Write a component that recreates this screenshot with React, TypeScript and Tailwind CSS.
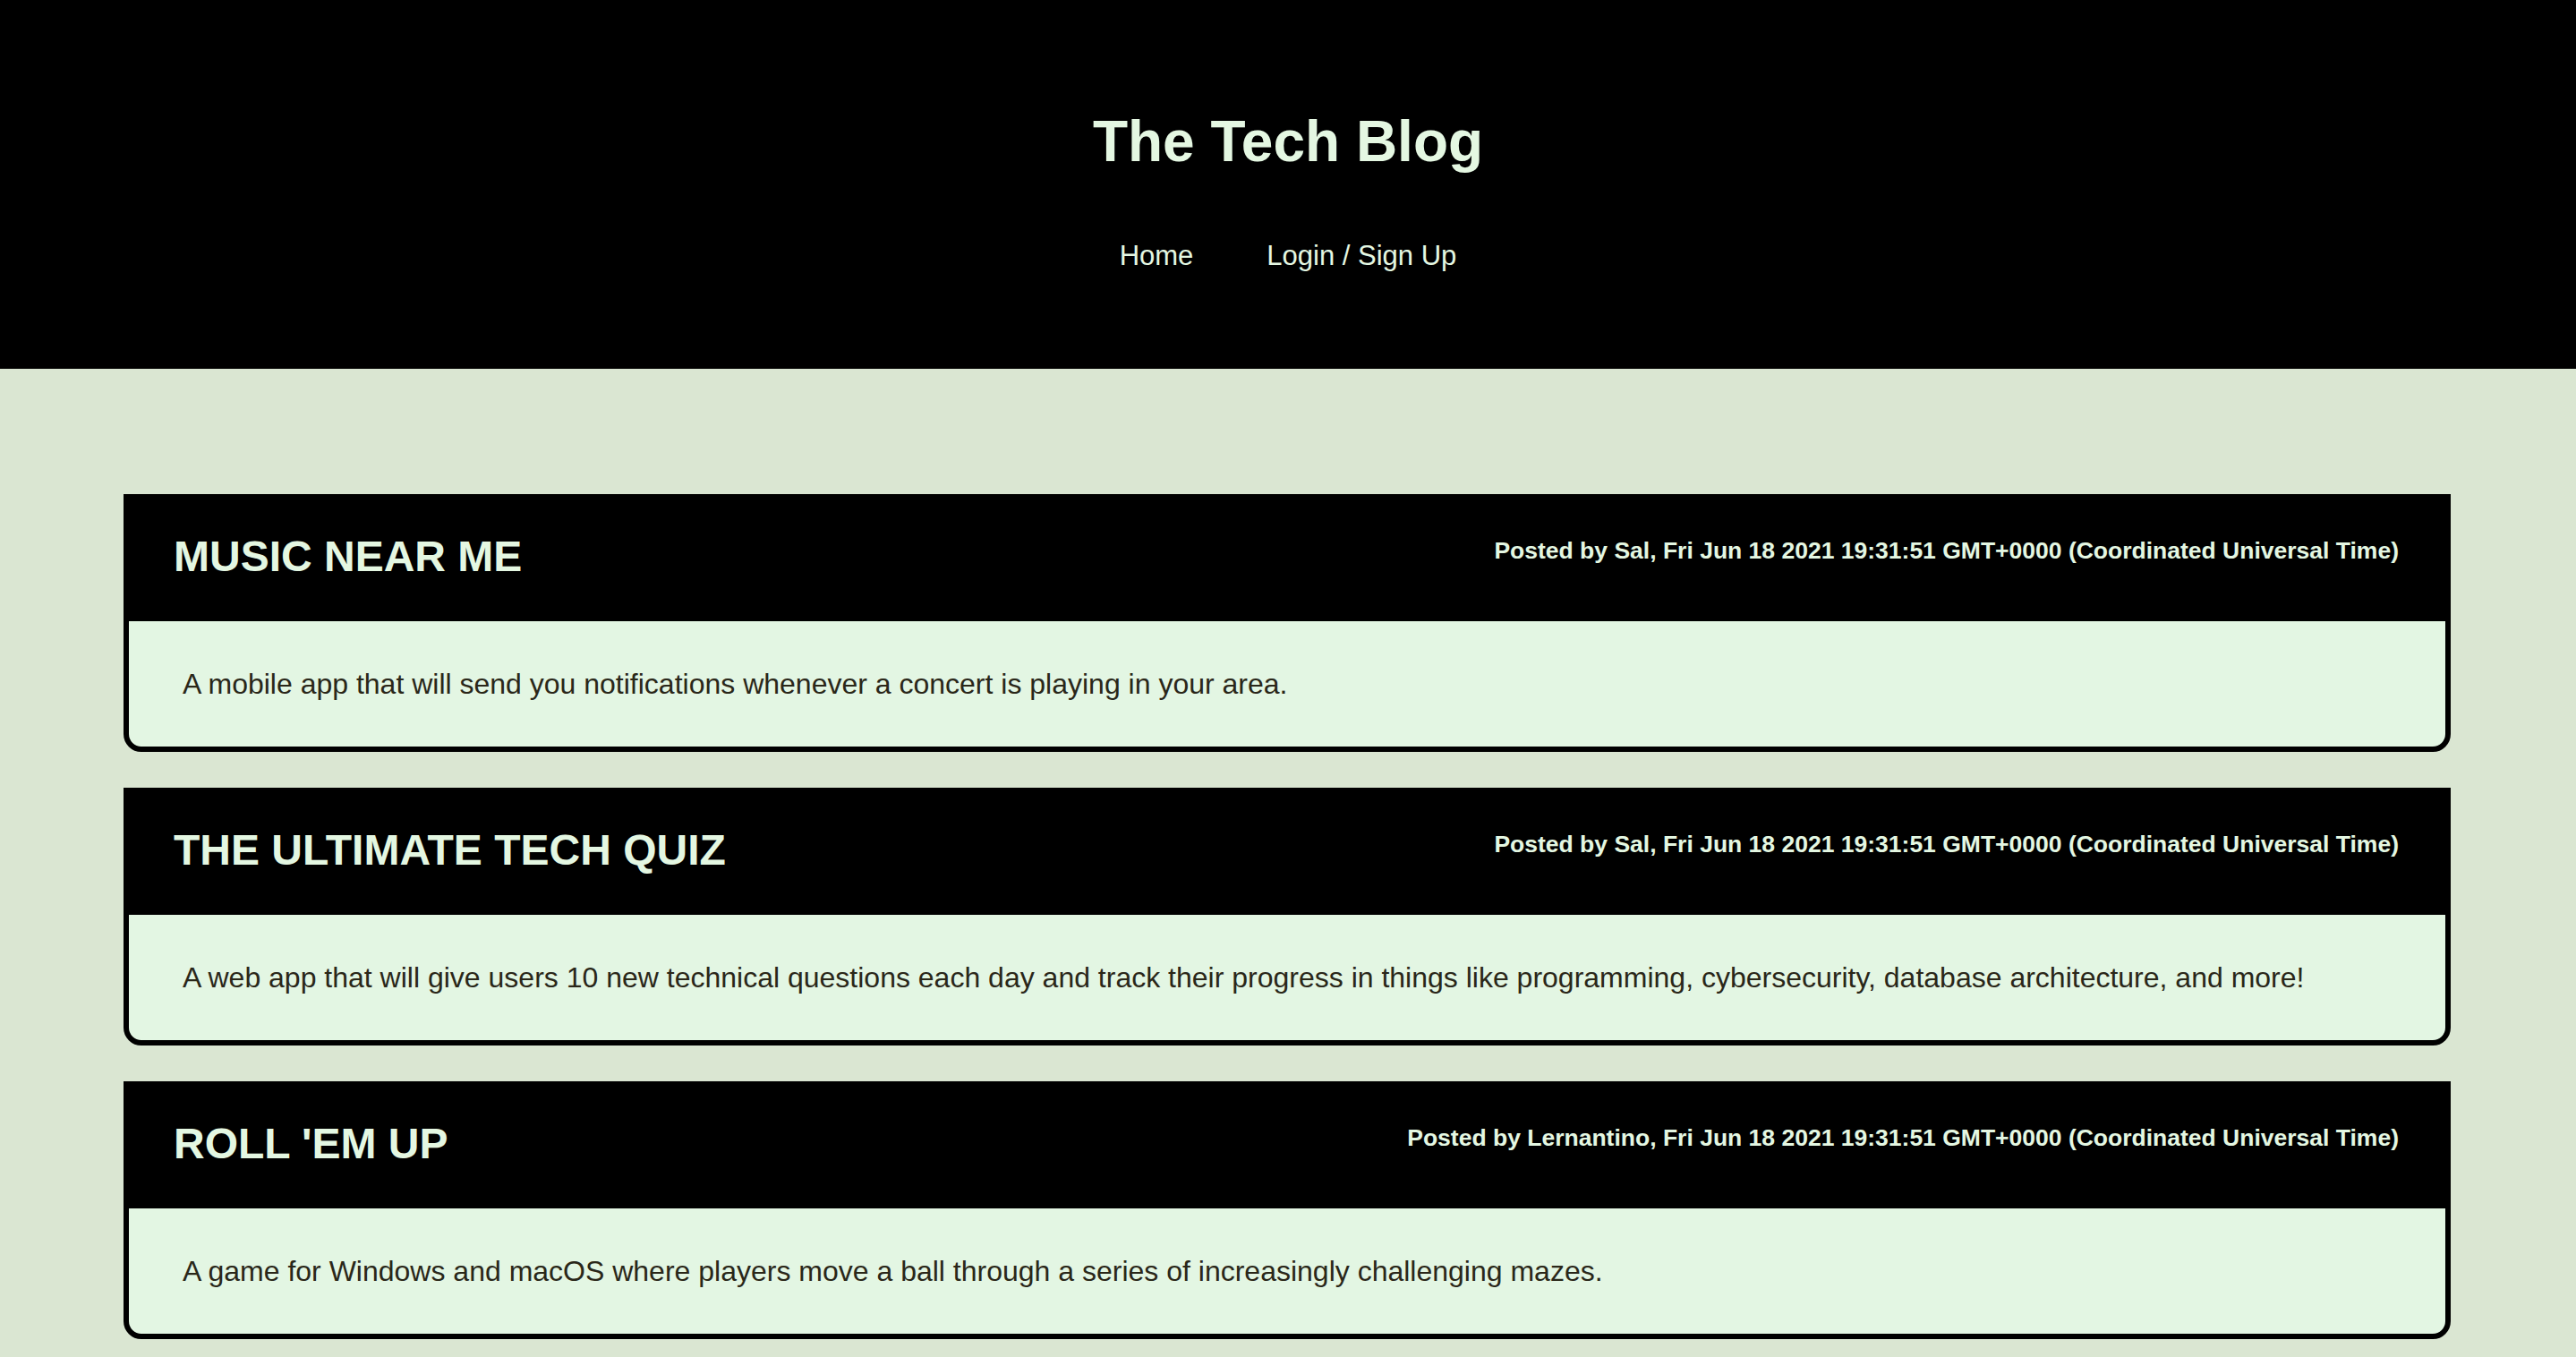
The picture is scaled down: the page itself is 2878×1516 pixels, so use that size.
import React from 'react'

interface Post {
  id: number
  title: string
  author: string
  date: string
  body: string
}

const posts: Post[] = [
  {
    id: 1,
    title: 'MUSIC NEAR ME',
    author: 'Sal',
    date: 'Fri Jun 18 2021 19:31:51 GMT+0000 (Coordinated Universal Time)',
    body: 'A mobile app that will send you notifications whenever a concert is playing in your area.',
  },
  {
    id: 2,
    title: 'THE ULTIMATE TECH QUIZ',
    author: 'Sal',
    date: 'Fri Jun 18 2021 19:31:51 GMT+0000 (Coordinated Universal Time)',
    body: 'A web app that will give users 10 new technical questions each day and track their progress in things like programming, cybersecurity, database architecture, and more!',
  },
  {
    id: 3,
    title: "ROLL 'EM UP",
    author: 'Lernantino',
    date: 'Fri Jun 18 2021 19:31:51 GMT+0000 (Coordinated Universal Time)',
    body: 'A game for Windows and macOS where players move a ball through a series of increasingly challenging mazes.',
  },
]

function PostCard({ post }: { post: Post }) {
  return (
    <article className="border-[6px] border-black rounded-b-[20px] overflow-hidden bg-[#e3f6e3]">
      {/* Post header */}
      <div className="h-[136px] bg-black flex items-start justify-between pl-[50px] pr-[52px] pt-9">
        <h2 className="text-[48px] leading-[55px] font-bold text-[#e4f7e2]">{post.title}</h2>
        <p className="mt-[6px] text-[26.5px] leading-[31px] font-bold text-[#e4f7e2]">
          Posted by {post.author}, {post.date}
        </p>
      </div>

      {/* Post body */}
      <div className="h-[140px] flex items-center pl-[60px] pr-12">
        <p className="text-[32px] leading-[37px] text-[#2a2719]">{post.body}</p>
      </div>
    </article>
  )
}

export default function App() {
  return (
    <div className="min-h-screen bg-[#dae6d2] font-['Liberation_Sans',Arial,sans-serif]">
      <header className="h-[412px] bg-black flex flex-col items-center pt-[122px]">
        <h1 className="text-[64px] leading-[72px] font-bold text-[#e4f7e2]">The Tech Blog</h1>
        <nav className="mt-[74px] flex items-center gap-[82px] text-[31px] leading-[36px] text-[#e4f7e2]">
          <a href="#">Home</a>
          <a href="#">Login / Sign Up</a>
        </nav>
      </header>

      <main className="pt-[140px] pl-[138px] pr-[140px] pb-10 flex flex-col gap-10">
        {posts.map((post) => (
          <PostCard key={post.id} post={post} />
        ))}
      </main>
    </div>
  )
}
